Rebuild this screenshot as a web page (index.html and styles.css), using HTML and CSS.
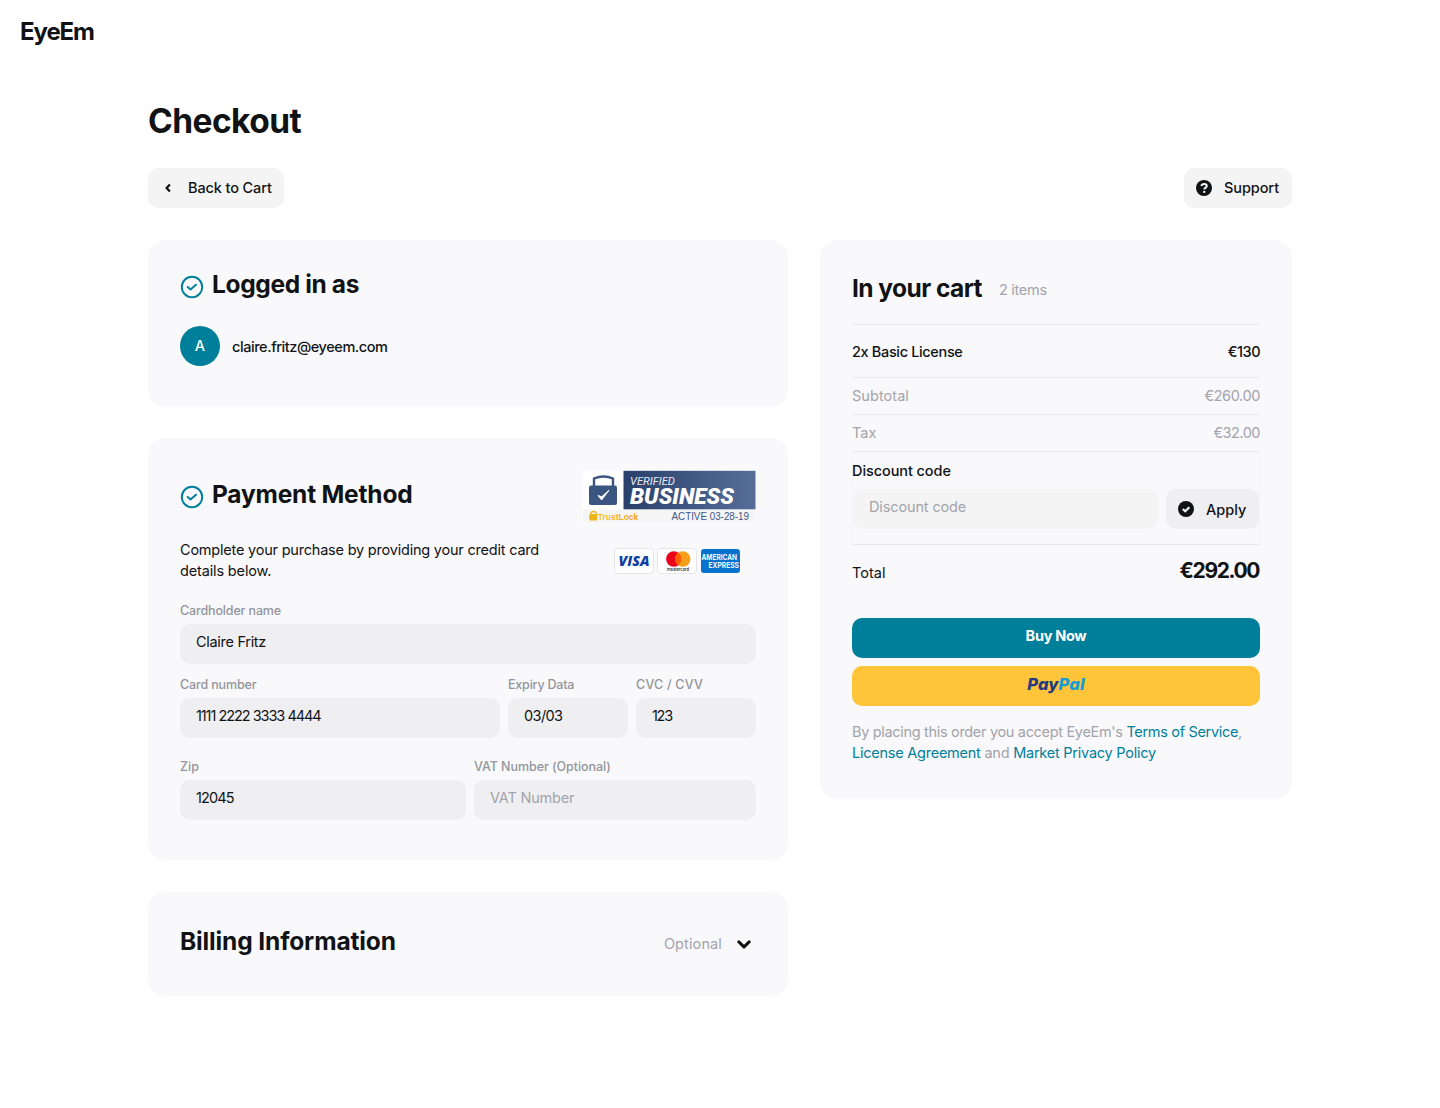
FILE: index.html
```html
<!DOCTYPE html>
<html lang="en">
<head>
<meta charset="utf-8">
<title>EyeEm – Checkout</title>
<link rel="stylesheet" href="styles.css">
</head>
<body>
<header class="topbar"><span class="logo">EyeEm</span></header>
<main class="page">
  <h1 class="title"><span class="t-title">Checkout</span></h1>
  <nav class="actions">
    <button class="btn btn-back">
      <svg class="ico" width="16" height="16" viewBox="0 0 16 16"><path d="M9.900 4.500 6.600 8l3.300 3.500" fill="none" stroke="#111214" stroke-width="2.200"/></svg>
      <span class="t-back">Back to Cart</span>
    </button>
    <button class="btn btn-support">
      <svg class="ico" width="16" height="16" viewBox="0 0 16 16"><circle cx="8" cy="8" r="8" fill="#111214"/><path d="M5.300 5.900C5.700 4.400 6.800 3.900 8.100 3.900c1.500 0 2.700.8 2.700 2.200 0 1.600-2.500 1.500-2.500 3.400" fill="none" stroke="#f4f4f4" stroke-width="2"/><rect x="7.200" y="10.900" width="2.100" height="2" fill="#f4f4f4"/></svg>
      <span class="t-support">Support</span>
    </button>
  </nav>
  <div class="columns">
    <div class="left">
      <section class="card account">
        <div class="heading">
          <svg class="check" width="24" height="24" viewBox="0 0 24 24" fill="none" stroke="#007f9a"><circle cx="12" cy="12" r="10.200" stroke-width="1.900"/><path d="m7.700 12 2.800 2.400 5.500-4.700" stroke-width="2" stroke-linecap="round" stroke-linejoin="round"/></svg>
          <h2 class="t-logged">Logged in as</h2>
        </div>
        <div class="user"><span class="avatar">A</span><span class="t-email">claire.fritz@eyeem.com</span></div>
      </section>

      <section class="card payment">
        <div class="payment-head">
          <div class="heading">
            <svg class="check" width="24" height="24" viewBox="0 0 24 24" fill="none" stroke="#007f9a"><circle cx="12" cy="12" r="10.200" stroke-width="1.900"/><path d="m7.700 12 2.800 2.400 5.500-4.700" stroke-width="2" stroke-linecap="round" stroke-linejoin="round"/></svg>
            <h2 class="t-payment">Payment Method</h2>
          </div>
          <svg class="badge" width="174" height="54" viewBox="0 0 174 54">
            <defs>
              <linearGradient id="navy" x1="0" y1="0" x2="1" y2="0"><stop offset="0" stop-color="#2a406b"/><stop offset="1" stop-color="#566e98"/></linearGradient>
              <linearGradient id="gold" x1="0" y1="0" x2="1" y2="0"><stop offset="0" stop-color="#f2c71b"/><stop offset="1" stop-color="#f59a1c"/></linearGradient>
            </defs>
            <rect x=".5" y=".5" width="173" height="53" fill="#fff"/>
            <path d="M.5 39.500h173V53H6Q.5 52 .5 46Z" fill="#f5f5f6"/>
            <rect x="41.500" y=".8" width="132" height="38.500" fill="url(#navy)"/>
            <path d="M12 17V8.500Q21.500 4.500 31 8.500V17" fill="none" stroke="#3b5581" stroke-width="2.400"/>
            <rect x="7" y="15.500" width="28" height="19.500" rx="2" fill="#3b5581"/>
            <path d="m16 25.500 3.600 4.500L27 20.300l-7.300 6.500z" fill="#fff" stroke="#fff"/>
            <text class="b-verified" x="48" y="15" textLength="45" lengthAdjust="spacingAndGlyphs">VERIFIED</text>
            <text class="b-business" x="48" y="33.500" textLength="104" lengthAdjust="spacingAndGlyphs">BUSINESS</text>
            <path d="M9 44.500v-2q2.500-2 5 0v2" fill="none" stroke="#f0b51c" stroke-width="1.300"/>
            <rect x="7.300" y="44" width="8" height="6.500" rx=".8" fill="#f0b51c"/>
            <text class="b-lock" x="15.800" y="50" textLength="40.500" lengthAdjust="spacingAndGlyphs" fill="url(#gold)">TrustLock</text>
            <text class="b-active" x="89.500" y="50.300" textLength="77.500" lengthAdjust="spacingAndGlyphs">ACTIVE 03-28-19</text>
          </svg>
        </div>
        <div class="intro">
          <p class="intro-text"><span class="t-intro1">Complete your purchase by providing your credit card</span><br><span class="t-intro2">details below.</span></p>
          <svg class="brands" width="128" height="28" viewBox="0 0 128 28">
            <rect x="1.500" y="1.500" width="39" height="25" rx="3.500" fill="#fff" stroke="#e6e6ea"/>
            <text class="visa" x="5.500" y="19" textLength="31" lengthAdjust="spacingAndGlyphs">VISA</text>
            <rect x="44.500" y="1.500" width="39" height="25" rx="3.500" fill="#fff" stroke="#e6e6ea"/>
            <circle cx="60.800" cy="12" r="7.700" fill="#eb001b"/><circle cx="69.800" cy="12" r="7.700" fill="#f79e1b"/>
            <path d="M65.300 5.800a7.700 7.700 0 0 1 0 12.400a7.700 7.700 0 0 1 0-12.400" fill="#ff5f00"/>
            <text class="mc" x="54" y="23.700" textLength="22" lengthAdjust="spacingAndGlyphs">mastercard</text>
            <rect x="88" y="2" width="39" height="24" rx="3" fill="#0873cf"/>
            <text class="amex" x="88.500" y="12.500" textLength="35.500" lengthAdjust="spacingAndGlyphs">AMERICAN</text>
            <text class="amex" x="95.500" y="20.500" textLength="30.500" lengthAdjust="spacingAndGlyphs">EXPRESS</text>
          </svg>
        </div>
        <div class="fields row-name">
          <label class="field"><span class="label t-holder">Cardholder name</span><span class="input"><span class="t-claire">Claire Fritz</span></span></label>
        </div>
        <div class="fields row-card">
          <label class="field"><span class="label t-cardnum">Card number</span><span class="input"><span class="t-number">1111 2222 3333 4444</span></span></label>
          <label class="field"><span class="label t-expiry">Expiry Data</span><span class="input"><span class="t-date">03/03</span></span></label>
          <label class="field"><span class="label t-cvc">CVC / CVV</span><span class="input"><span class="t-code">123</span></span></label>
        </div>
        <div class="fields row-zip">
          <label class="field"><span class="label t-zip">Zip</span><span class="input"><span class="t-zipval">12045</span></span></label>
          <label class="field"><span class="label t-vat">VAT Number (Optional)</span><span class="input placeholder"><span class="t-vatval">VAT Number</span></span></label>
        </div>
      </section>

      <section class="card billing">
        <h2 class="t-billing">Billing Information</h2>
        <div class="optional"><span class="t-optional">Optional</span>
          <svg width="16" height="16" viewBox="0 0 16 16"><path d="m2.800 5.800 5.200 5 5.200-5" fill="none" stroke="#111214" stroke-width="3" stroke-linecap="round"/></svg>
        </div>
      </section>
    </div>

    <aside class="card cart">
      <div class="cart-head"><h2 class="t-cart">In your cart</h2><span class="muted t-items">2 items</span></div>
      <div class="line line-item"><span class="t-license">2x Basic License</span><span class="t-130">€130</span></div>
      <div class="line muted"><span class="t-subtotal">Subtotal</span><span class="t-260">€260.00</span></div>
      <div class="line muted"><span class="t-tax">Tax</span><span class="t-32">€32.00</span></div>
      <div class="discount">
        <span class="discount-label t-discount">Discount code</span>
        <div class="discount-row">
          <span class="input discount-input"><span class="t-dcode">Discount code</span></span>
          <button class="btn btn-apply">
            <svg class="ico" width="16" height="16" viewBox="0 0 16 16"><circle cx="8" cy="8" r="8" fill="#111214"/><path d="m4.800 8 2.400 2.200L11.400 6.200" fill="none" stroke="#efeff1" stroke-width="2.200"/></svg>
            <span class="t-apply">Apply</span>
          </button>
        </div>
      </div>
      <div class="total"><span class="t-total">Total</span><strong class="t-292">€292.00</strong></div>
      <button class="pay buy"><span class="t-buy">Buy Now</span></button>
      <button class="pay paypal"><span class="t-paypal">Pay<span class="pal">Pal</span></span></button>
      <p class="terms muted"><span class="t-terms1">By placing this order you accept EyeEm's <a>Terms of Service</a>,</span><br><span class="t-terms2"><a>License Agreement</a> and <a>Market Privacy Policy</a></span></p>
    </aside>
  </div>
</main>
</body>
</html>
```

FILE: styles.css
```css
* { box-sizing: border-box; }
body { margin: 0; background: #fff; color: #111214; font: 400 14.5px/21px Inter, "Liberation Sans", sans-serif; white-space: nowrap; }
h1, h2, p { margin: 0; }
button { border: 0; font: inherit; color: inherit; }
svg { display: block; flex: none; }

.topbar { padding: 18px 20px 0; height: 64px; }
.logo { display: block; font-size: 24px; line-height: 28px; font-weight: 650; letter-spacing: -1.1px; }
.page { width: 1144px; margin: 0 auto; }
.title { height: 104px; padding-top: 37px; font-size: 33.500px; line-height: 40px; font-weight: 650; letter-spacing: -.55px; }
.actions { display: flex; justify-content: space-between; }
.btn { display: flex; align-items: center; gap: 12px; height: 40px; padding: 0 12px; border-radius: 10px; background: #f4f4f4; font-weight: 500; line-height: 19px; }
.btn span { padding-bottom: 1px; }
.btn-back { width: 136px; }
.btn-support { width: 108px; }

.columns { display: flex; align-items: flex-start; gap: 32px; margin-top: 32px; }
.left { display: flex; flex-direction: column; gap: 32px; width: 640px; }
.card { padding: 32px; border-radius: 16px; background: #f9f9fb; }
h2 { font-size: 24.500px; line-height: 24px; font-weight: 650; }
.muted, .placeholder { color: #a3a3aa; }

.heading { display: flex; align-items: flex-start; gap: 8px; }
.account { height: 166px; }
.account .check { margin-top: 3px; }
.user { display: flex; align-items: center; gap: 12px; margin-top: 27px; font-weight: 500; }
.avatar { width: 40px; height: 40px; border-radius: 50%; background: #007f9a; color: #fff; line-height: 40px; text-align: center; }

.payment { height: 422px; }
.payment-head { display: flex; justify-content: space-between; height: 69px; }
.payment-head .heading { padding-top: 12px; }
.payment-head .check { margin-top: 3px; }
.intro { display: flex; justify-content: space-between; height: 64px; padding-right: 15px; }
.brands { margin-top: 8px; }
.fields { display: grid; gap: 8px; height: 74px; }
.row-card { grid-template-columns: 320px 120px 120px; height: 82px; }
.row-zip { grid-template-columns: 286px 282px; }
.label { display: block; margin-bottom: 5px; font-size: 12.500px; line-height: 16px; font-weight: 500; color: #94949b; }
.input { display: flex; height: 40px; padding: 7px 16px; border-radius: 10px; background: #efeff1; }

.billing { display: flex; justify-content: space-between; align-items: center; height: 104px; padding-top: 28px; }
.billing h2 { line-height: 38px; padding-bottom: 2px; }
.optional { display: flex; align-items: center; gap: 14px; padding: 3px 4px 0 0; color: #a3a3aa; }

.cart { width: 472px; height: 559px; }
.cart-head { display: flex; height: 52px; padding-top: 4px; gap: 17px; }
.t-items { line-height: 27px; }
.line { display: flex; justify-content: space-between; height: 37px; border-top: 1px solid #e8e8eb; line-height: 35px; }
.line-item { height: 53px; line-height: 54px; font-weight: 550; }
.discount { height: 94px; padding-top: 9px; border: 1px solid #f4f4f7; border-top-color: #e8e8eb; border-bottom-color: #e8e8eb; }
.discount-label { display: block; margin-left: -1px; line-height: 20px; font-weight: 500; }
.discount-row { display: flex; justify-content: space-between; margin-top: 8px; }
.discount-input { width: 305px; background: #f4f4f4; color: #a3a3aa; }
.btn-apply { width: 93px; background: #efeff1; }
.btn-apply span { padding: 0; }
.total { display: flex; justify-content: space-between; height: 73px; padding-top: 17px; line-height: 22px; }
.total strong { font-size: 21px; line-height: 18px; font-weight: 750; }
.pay { display: block; width: 100%; height: 40px; padding: 0 0 4px; border-radius: 10px; text-align: center; }
.buy { background: #007f9a; color: #fff; font-weight: 700; line-height: 34px; }
.paypal { margin-top: 8px; background: #ffc439; color: #253b80; font: italic 800 16.500px/35px Inter, sans-serif; letter-spacing: .1px; }
.pal { color: #179bd7; }
.terms { margin-top: 15px; }
.terms a { color: #007f9a; }

.t-back { letter-spacing: -.12px; }
.t-support { letter-spacing: -.08px; }
.t-logged { letter-spacing: -.35px; }
.t-email { letter-spacing: -.43px; }
.t-payment { letter-spacing: -.2px; }
.t-intro1 { letter-spacing: -.21px; }
.t-intro2 { letter-spacing: -.15px; }
.t-holder, .t-cardnum { letter-spacing: -.14px; }
.t-expiry { letter-spacing: -.2px; }
.t-cvc { letter-spacing: .22px; }
.t-claire { letter-spacing: -.3px; }
.t-number { letter-spacing: -1.1px; word-spacing: .3px; }
.t-date { letter-spacing: -.6px; }
.t-code { letter-spacing: -1.3px; }
.t-zipval { letter-spacing: -.9px; }
.t-vat { letter-spacing: -.05px; }
.t-vatval { letter-spacing: -.2px; }
.t-billing { letter-spacing: -.13px; }
.t-optional { letter-spacing: .12px; }
.t-cart { letter-spacing: -.55px; }
.t-items { letter-spacing: -.3px; }
.t-license { letter-spacing: -.35px; }
.t-130 { letter-spacing: -.5px; }
.t-subtotal { letter-spacing: .05px; }
.t-260 { letter-spacing: -.4px; }
.t-32 { letter-spacing: -.5px; }
.t-discount { letter-spacing: -.08px; }
.t-dcode { letter-spacing: -.13px; }
.t-292 { margin-right: 1px; letter-spacing: -1.4px; }
.t-buy { letter-spacing: -.3px; }
.t-terms1 { letter-spacing: -.32px; }
.t-terms2 { letter-spacing: -.24px; }

.b-verified { font: italic 400 11px Roboto, sans-serif; fill: #e6eaf2; }
.b-business { font: italic 900 21.500px Roboto, sans-serif; fill: #fff; }
.b-lock { font: 700 9px "Liberation Sans", sans-serif; }
.b-active { font: 400 10.500px "Liberation Sans", sans-serif; fill: #41578a; }
.visa { font: italic 800 14.500px "Open Sans", sans-serif; fill: #0f3fa0; }
.mc { font: 500 4.500px Inter, sans-serif; fill: #222; }
.amex { font: 700 7.500px Inter, sans-serif; fill: #f2f8ff; }
```
